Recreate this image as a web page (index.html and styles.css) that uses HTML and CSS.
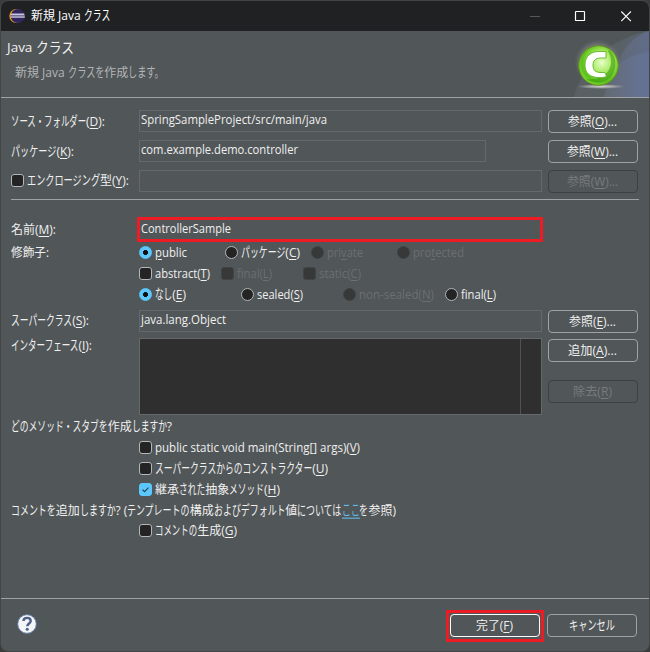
FILE: index.html
```html
<!DOCTYPE html>
<html lang="ja">
<head>
<meta charset="utf-8">
<title>新規 Java クラス</title>
<link rel="stylesheet" href="styles.css">
</head>
<body>
<div class="window">
  <div class="titlebar">
    <svg class="logo" width="16" height="16" viewBox="0 0 16 16"><circle cx="7.3" cy="8" r="7" fill="#f39a24"/><circle cx="8.8" cy="8" r="7.1" fill="#30265f"/><path d="M2 6.3h13.3M1.8 9h14" stroke="#c9c5da" stroke-width="1.5"/><path d="M1.8 7.7h14" stroke="#8580ac" stroke-width="1"/></svg>
    <span class="t caption" data-w="79">新規 Java クラス</span>
    <svg class="controls" width="102" height="14" viewBox="0 0 102 14" fill="none"><path d="M0 7.5h10" stroke="#55585a"/><rect x="45.5" y="2.5" width="9" height="9" rx=".6" stroke="#fff" stroke-width="1.2"/><path d="M91.3 2.5l9.6 9.6M100.9 2.5l-9.6 9.6" stroke="#fff" stroke-width="1.1"/></svg>
  </div>
  <div class="header">
    <div class="heading">
      <div class="h1"><span class="t" data-w="67">Java クラス</span></div>
      <div class="sub"><span class="t" data-w="149">新規 Java クラスを作成します。</span></div>
    </div>
    <svg class="banner" width="75" height="66" viewBox="0 0 75 66">
      <defs>
        <linearGradient id="sky" x1="0" x2="1"><stop offset="0" stop-color="#5c6265"/><stop offset=".55" stop-color="#5b6369"/><stop offset="1" stop-color="#5c6576"/></linearGradient>
        <linearGradient id="sky2" x1="0" x2="1"><stop offset="0" stop-color="#7783a0" stop-opacity=".12"/><stop offset="1" stop-color="#6676a4" stop-opacity=".5"/></linearGradient>
        <radialGradient id="glow"><stop offset=".7" stop-color="#b4b9b4" stop-opacity=".7"/><stop offset="1" stop-color="#888" stop-opacity="0"/></radialGradient>
        <radialGradient id="ball" cx=".58" cy=".42" r=".62"><stop offset="0" stop-color="#e6ffc9"/><stop offset=".45" stop-color="#a5e95b"/><stop offset=".8" stop-color="#5cc01b"/><stop offset="1" stop-color="#7cdc2f"/></radialGradient>
        <radialGradient id="floor"><stop offset="0" stop-color="#d3d3d3"/><stop offset=".6" stop-color="#a4a6a7" stop-opacity=".8"/><stop offset="1" stop-color="#999" stop-opacity="0"/></radialGradient>
      </defs>
      <path d="M0 66C8 35 34 8 75 0V66Z" fill="url(#sky)" opacity=".8"/>
      <path d="M42 36C49 17 58 6 75 0V66H30Z" fill="url(#sky2)"/>
      <path d="M30 66C31 44 44 25 75 21V66Z" fill="url(#sky2)"/>
      <circle cx="23.5" cy="31.5" r="23" fill="url(#glow)" opacity=".6"/>
      <ellipse cx="27" cy="55.5" rx="24" ry="2.4" fill="url(#floor)"/>
      <circle cx="24.5" cy="34.5" r="19.8" fill="url(#ball)" stroke="#668b1e"/>
      <path d="M35 18.8C42 24 44 36 37 46C30 53 19 53 12 48C25 50 36 43 37 32C37 27 36 23 34 20Z" fill="#3d9d10" opacity=".6"/>
      <path d="M32 20.5V27H27C21 27 19 30 19 34C19 39 21 41.5 27 41.5H31L32.5 45.5C30 46.5 28 46.5 25 46.5C16 46.5 11 42 11 34C11 25 17 20.5 25 20.5Z" fill="#fff" stroke="#62b42b" stroke-width=".9"/>
    </svg>
  </div>
  <div class="form">
    <div class="row r30"><span class="label"><span class="t" data-w="94">ソース・フォルダー(<u>D</u>):</span></span><span class="field"><span class="t" data-w="186">SpringSampleProject/src/main/java</span></span><span class="btn"><span class="t" data-w="49">参照(<u>O</u>)...</span></span></div>
    <div class="row r30"><span class="label"><span class="t" data-w="63">パッケージ(<u>K</u>):</span></span><span class="field short"><span class="t" data-w="157">com.example.demo.controller</span></span><span class="btn"><span class="t" data-w="51">参照(<u>W</u>)...</span></span></div>
    <div class="row r30"><span class="label opt"><i class="check"></i><span class="t" data-w="102">エンクロージング型(<u>Y</u>):</span></span><span class="field"></span><span class="btn off"><span class="t" data-w="51">参照(<u>W</u>)...</span></span></div>
    <div class="rule"></div>
    <div class="row name"><span class="label"><span class="t" data-w="45">名前(<u>M</u>):</span></span><span class="field marked"><span class="t" data-w="90">ControllerSample</span></span></div>
    <div class="row r21"><span class="label"><span class="t" data-w="38">修飾子:</span></span><span class="options access">
      <span class="opt"><i class="radio on"></i><span class="t" data-w="32"><u>p</u>ublic</span></span><span class="opt"><i class="radio"></i><span class="t" data-w="59">パッケージ(<u>C</u>)</span></span><span class="opt off"><i class="radio"></i><span class="t" data-w="36">pri<u>v</u>ate</span></span><span class="opt off"><i class="radio"></i><span class="t" data-w="51">pro<u>t</u>ected</span></span></span></div>
    <div class="row r21"><span class="label"></span><span class="options mods">
      <span class="opt"><i class="check"></i><span class="t" data-w="55">abstract(<u>T</u>)</span></span><span class="opt off"><i class="check"></i><span class="t" data-w="35">final(<u>L</u>)</span></span><span class="opt off"><i class="check"></i><span class="t" data-w="42">static(<u>C</u>)</span></span></span></div>
    <div class="row r21"><span class="label"></span><span class="options seal">
      <span class="opt"><i class="radio on"></i><span class="t" data-w="31">なし(<u>E</u>)</span></span><span class="opt"><i class="radio"></i><span class="t" data-w="46">sealed(<u>S</u>)</span></span><span class="opt off"><i class="radio"></i><span class="t" data-w="75">non-sealed(<u>N</u>)</span></span><span class="opt"><i class="radio"></i><span class="t" data-w="35">final(<u>L</u>)</span></span></span></div>
    <div class="row super"><span class="label"><span class="t" data-w="78">スーパークラス(<u>S</u>):</span></span><span class="field"><span class="t" data-w="85">java.lang.Object</span></span><span class="btn"><span class="t" data-w="47">参照(<u>E</u>)...</span></span></div>
    <div class="row ifaces"><span class="label"><span class="t" data-w="81">インターフェース(<u>I</u>):</span></span><span class="list"></span>
      <span class="stack"><span class="btn"><span class="t" data-w="49">追加(<u>A</u>)...</span></span><span class="btn off"><span class="t" data-w="39">除去(<u>R</u>)</span></span></span></div>
    <div class="row question"><span class="t" data-w="161">どのメソッド・スタブを作成しますか?</span></div>
    <div class="row r21 inset opt"><i class="check"></i><span class="t" data-w="205">public static void main(String[] args)(<u>V</u>)</span></div>
    <div class="row r21 inset opt"><i class="check"></i><span class="t" data-w="173">スーパークラスからのコンストラクター(<u>U</u>)</span></div>
    <div class="row r21 inset opt"><i class="check on"><svg width="11" height="11" viewBox="0 0 11 11"><path d="M2.5 5.7l2 2 4-4" fill="none" stroke="#1e3f50" stroke-width="1.1"/></svg></i><span class="t" data-w="125">継承された抽象メソッド(<u>H</u>)</span></div>
    <div class="row comments"><span class="t" data-w="385">コメントを追加しますか? (テンプレートの構成およびデフォルト値については<u class="link">ここ</u>を参照)</span></div>
    <div class="row r21 inset opt"><i class="check"></i><span class="t" data-w="82">コメントの生成(<u>G</u>)</span></div>
  </div>
  <div class="footer">
    <svg class="help" width="22" height="22" viewBox="0 0 22 22"><circle cx="11" cy="11" r="9.4" fill="#f4f5f7" stroke="#59709a"/><path d="M7.5 8C7.5 3.8 14.7 3.8 14.7 8C14.7 10.4 11.3 10.6 11.3 13.3" fill="none" stroke="#4d6088" stroke-width="2.4"/><circle cx="11.2" cy="16.3" r="1.5" fill="#4d6088"/></svg>
    <span class="finish"><span class="btn default"><span class="t" data-w="37">完了(<u>F</u>)</span></span></span>
    <span class="btn"><span class="t" data-w="46">キャンセル</span></span>
  </div>
</div>
<script src="fit.js"></script>
</body>
</html>
```
FILE: styles.css
```css
* { box-sizing: border-box; }
body { margin: 0; background: #3b3b3c; overflow: hidden; font: 12px/16px "Open Sans", "Noto Sans CJK JP", sans-serif; color: #f0f0f0; }
.window { width: 650px; height: 652px; border: 1px solid #434546; border-radius: 8px; background: #515658; overflow: hidden; display: flex; flex-direction: column; }
.t { display: inline-block; white-space: pre; transform-origin: 0 50%; flex: none; }
.kana { display: inline-block; white-space: pre; transform-origin: 0 50%; text-decoration: inherit; }
u { text-decoration: underline; text-underline-offset: 2px; text-decoration-thickness: 1px; }
.titlebar { height: 30px; flex: none; background: #1f2123; display: flex; align-items: center; padding: 0 17px 0 8px; color: #fff; }
.caption { margin-left: 6px; }
.controls { margin-left: auto; }
.header { height: 67px; flex: none; display: flex; justify-content: space-between; border-bottom: 1px solid #a0a3a4; }
.heading { padding: 6px 0 0 6px; }
.h1 { font-size: 13.5px; line-height: 20px; }
.sub { margin: 8px 0 0 8px; line-height: 16px; color: #b2b5b6; }
.banner { display: block; }
.form { padding: 8px 10px 0 10px; flex: 1; }
.row { display: flex; align-items: center; }
.r30 { height: 30px; }
.r30 .label { padding-top: 1px; }
.r21 { height: 21px; }
.label { width: 128px; flex: none; display: flex; align-items: center; }
.r30 .label.opt { padding: 0; }
.field { width: 403px; height: 22px; border: 1px solid #66696a; padding: 1px 1px 0; line-height: 16px; flex: none; }
.short { width: 347px; margin-right: 56px; }
.btn { width: 90px; height: 23px; flex: none; border: 1px solid #a0a2a3; border-radius: 4px; display: flex; align-items: center; justify-content: center; margin-left: 6px; padding: 1px 1px 0 0; }
.btn.off { border-color: #3d4041; color: #777b7d; }
.rule { height: 1px; margin-top: 3px; background: #a0a3a4; }
.name { height: 26px; margin-top: 16px; }
.name .label { padding-top: 2px; }
.marked { width: 406px; height: 25px; margin-left: -2px; border: 3px solid #ed1c24; padding: 0 1px; line-height: 17px; }
.options { display: grid; align-items: center; }
.access { grid-template-columns: 86px 86px 86px 86px; }
.mods { grid-template-columns: 82px 82px 82px; }
.seal { grid-template-columns: 102px 102px 102px 60px; }
.opt { display: flex; align-items: center; gap: 3px; }
.opt.off { color: #6b6f71; }
.check, .radio { width: 13px; height: 13px; flex: none; border: 1px solid #b4b6b7; background: #242424; display: flex; }
.check { border-radius: 3px; }
.label .check { margin-top: -1px; }
.radio { border-radius: 50%; }
.off .check, .off .radio { border-color: #414445; background: #373838; }
.check.on { background: #5bc7fb; border-color: #5bc7fb; }
.radio.on { border-color: #5bc7fb; background: radial-gradient(circle, #111 0 2.2px, #5bc7fb 2.8px); }
.super { height: 30px; margin-top: 1px; }
.ifaces { height: 77px; margin-top: 2px; align-items: flex-start; }
.list { width: 403px; height: 77px; border: 1px solid #66696a; background: linear-gradient(to right, #2f2f2f 380px, #515255 380px 381px, #2f2f2f 381px); }
.stack { display: flex; flex-direction: column; gap: 18px; padding-top: 1px; }
.question { height: 22px; padding-top: 1px; }
.inset { padding-left: 128px; }
.comments { height: 20px; padding-top: 1px; }
.link { color: #61bdec; }
.footer { height: 53px; flex: none; border-top: 1px solid #a0a3a4; display: flex; align-items: center; padding: 0 12px 2px 15px; }
.finish { margin-left: auto; width: 98px; height: 32px; border: 3px solid #ed1c24; display: flex; align-items: center; justify-content: center; margin-top: 3px; }
.finish .btn { margin: 0 1px 0 0; }
.footer > .btn { margin: 2px 0 0 3px; }
.default { border-color: #fff; }
```
FILE: fit.js
```js
const kanaRun = /([\u3040-\u30ff、。]+)/;
document.querySelectorAll('.t').forEach(label => {
  const target = Number(label.dataset.w);
  const walker = document.createTreeWalker(label, NodeFilter.SHOW_TEXT);
  const nodes = [];
  while (walker.nextNode()) nodes.push(walker.currentNode);
  nodes.forEach(node => {
    const parts = node.data.split(kanaRun).filter(Boolean);
    node.replaceWith(...parts.map(part => {
      if (!kanaRun.test(part)) return document.createTextNode(part);
      const run = document.createElement('span');
      run.className = 'kana';
      run.textContent = part;
      return run;
    }));
  });
  const natural = label.getBoundingClientRect().width;
  const runs = [...label.querySelectorAll('.kana')];
  if (runs.length) {
    const widths = runs.map(run => run.getBoundingClientRect().width);
    const total = widths.reduce((a, b) => a + b, 0);
    const scale = (target - natural + total) / total;
    runs.forEach((run, i) => {
      run.style.width = widths[i] * scale + 'px';
      run.style.transform = `scale(${scale}, 1.1)`;
    });
  } else {
    label.style.transform = `scaleX(${target / natural})`;
    label.style.width = natural + 'px';
    label.style.marginRight = target - natural + 'px';
  }
});
```
